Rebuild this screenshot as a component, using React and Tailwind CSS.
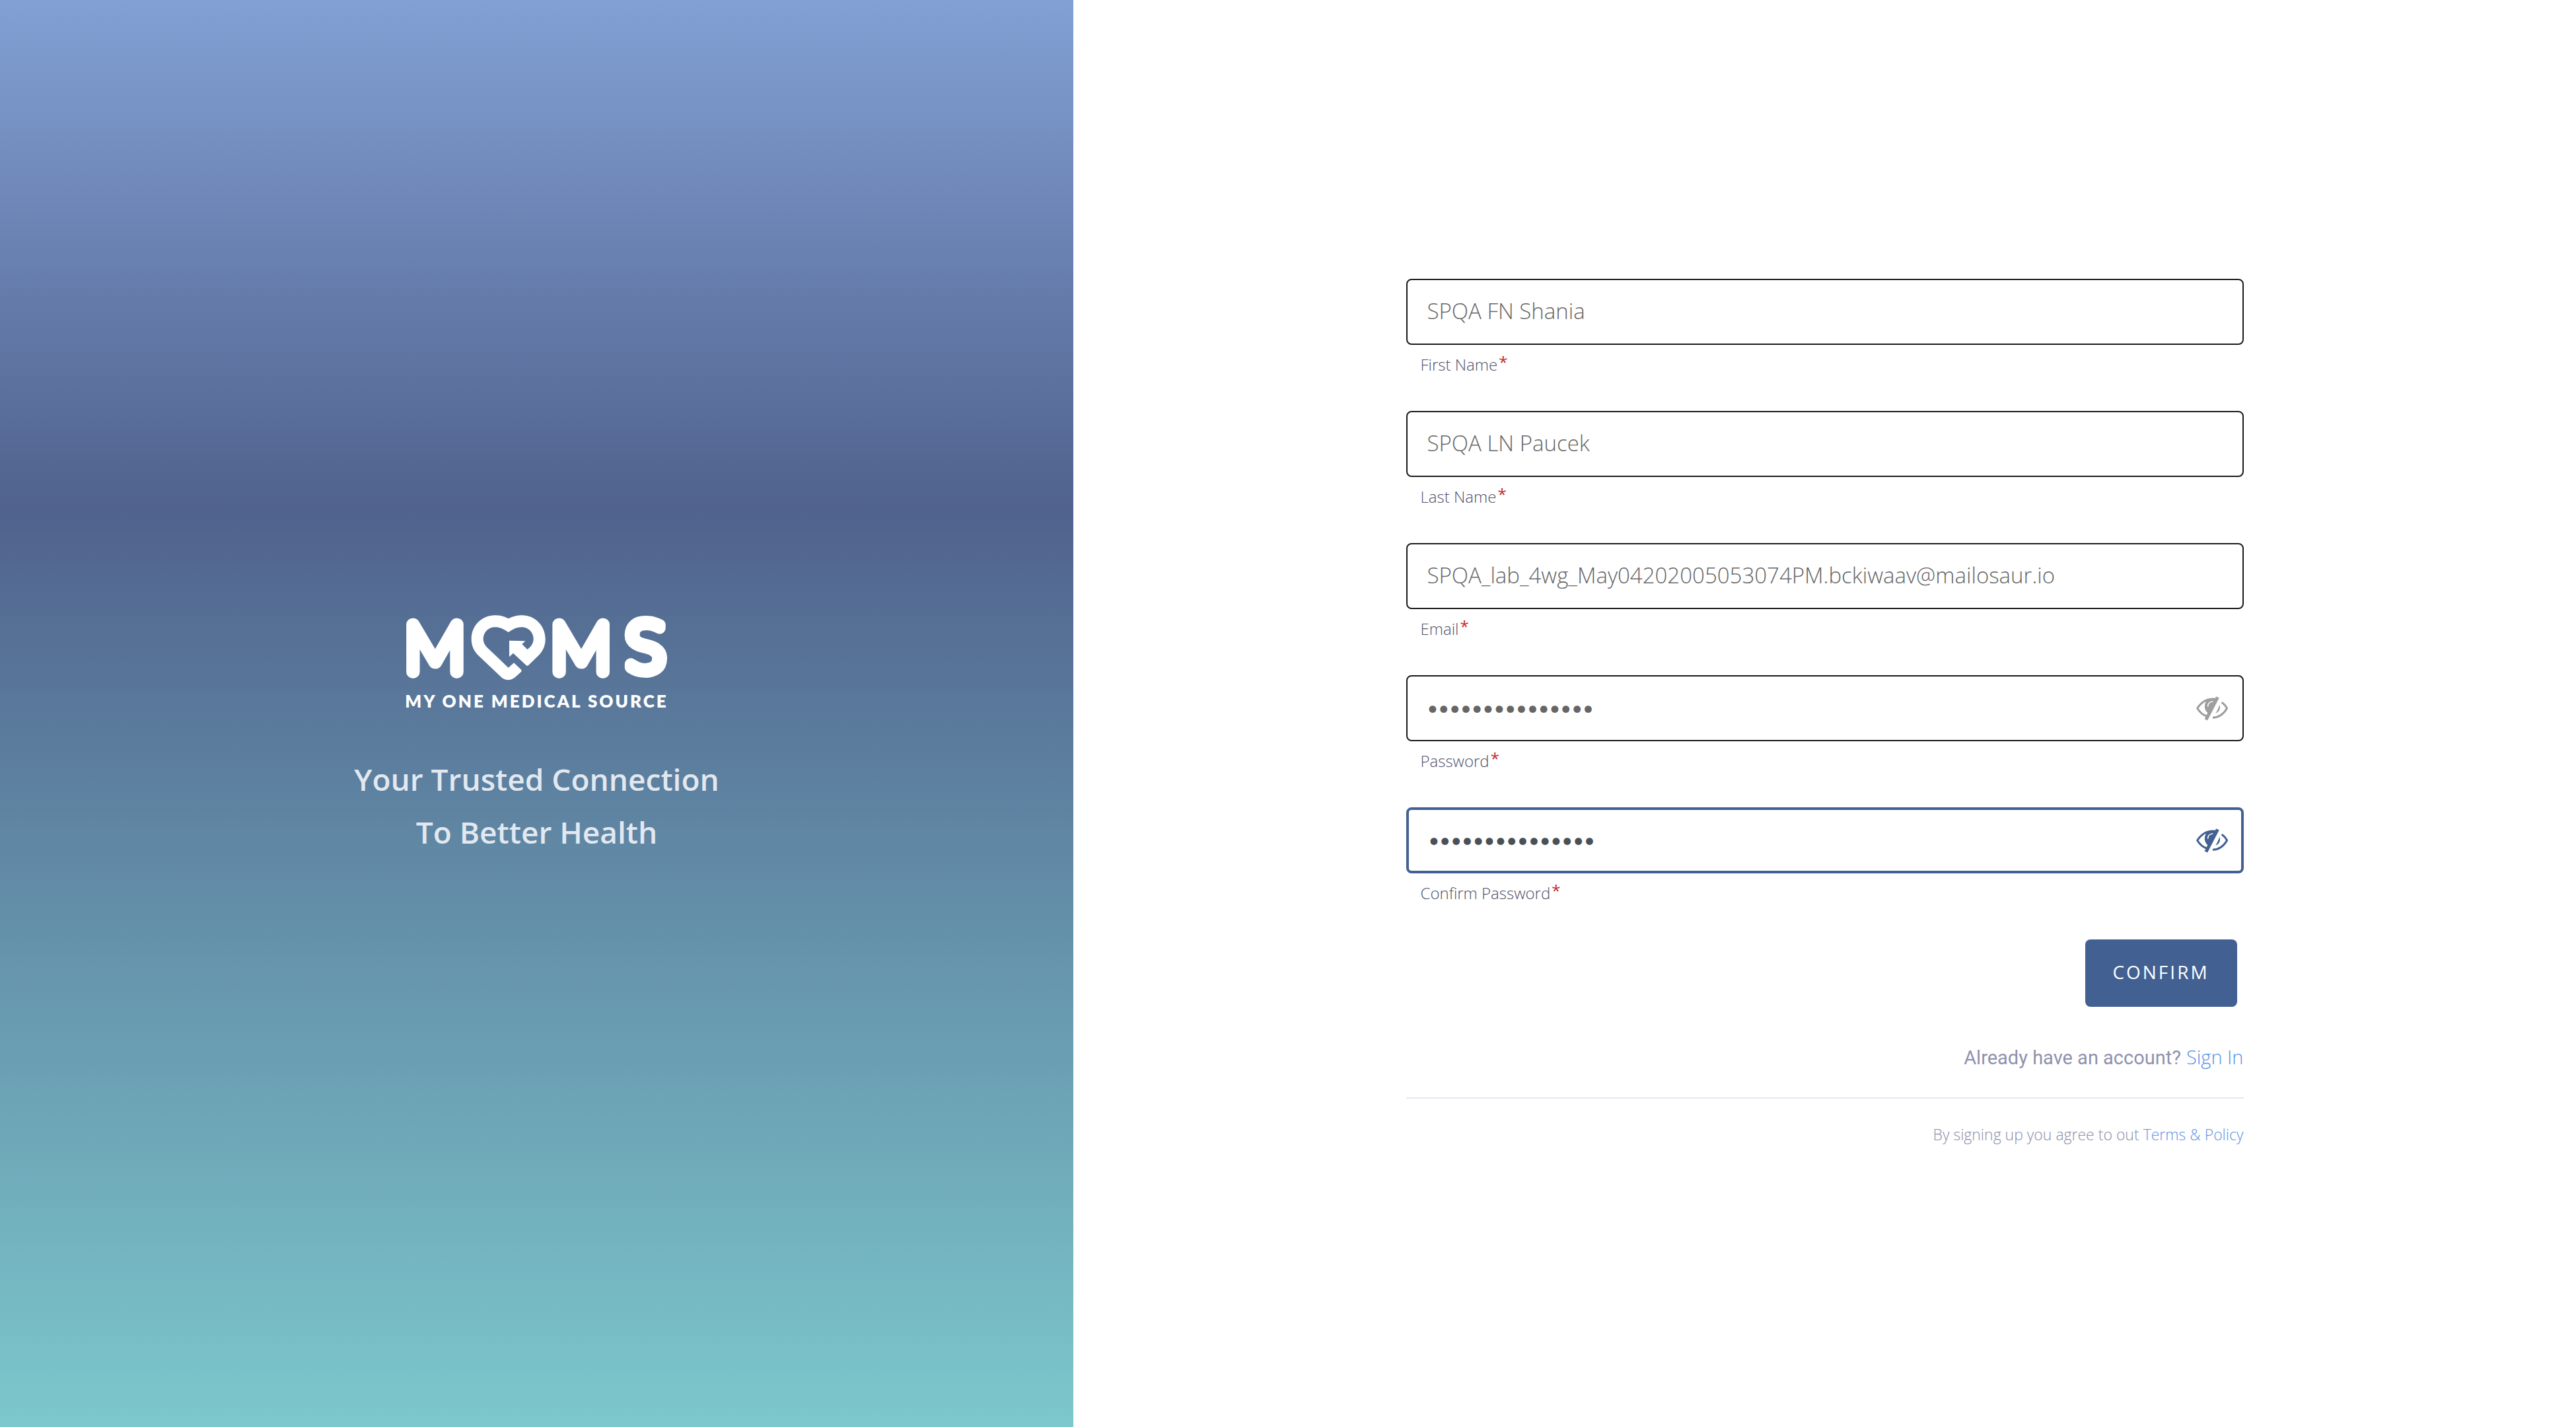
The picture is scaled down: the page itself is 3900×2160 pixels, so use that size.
import React, { useState } from "react";

const SANS = "font-['Open_Sans',sans-serif]";

function Logo() {
  return (
    <svg viewBox="70 88 1200 300" className="h-[100px] w-[400px] overflow-visible" role="img" aria-label="MOMS">
      <g fill="#fff" stroke="#fff" strokeLinejoin="round" strokeWidth="58" fontFamily="Lato, sans-serif" fontWeight="100" fontSize="306">
        <text x="70" y="346">M</text>
        <text x="734" y="346">M</text>
      </g>
      <text x="1068" y="344" fill="#fff" stroke="#fff" strokeLinejoin="round" strokeWidth="54" fontFamily="'DejaVu Sans', sans-serif" fontWeight="200" fontSize="300">
        S
      </text>
      <path
        fill="#fff"
        d="M540 104C565 92 585 89 602 89C662 89 708 138 708 198C708 232 692 258 672 276L632 315Q626 321 620 315L562 261L544 278L544 204L617 206L602 220L626 244C642 233 654 218 654 196C654 166 630 143 600 143C575 143 560 154 540 166C520 154 505 143 480 143C450 143 426 166 426 196C426 212 433 224 444 236L540 327L565 305L597 335Q602 341 597 347L570 371Q540 394 511 373L404 272C384 252 372 228 372 196C372 136 420 89 480 89C505 89 520 94 540 104Z"
      />
    </svg>
  );
}

function EyeOff() {
  return (
    <svg viewBox="609 160 150 114" className="h-[38px] w-[50px]" fill="none" stroke="currentColor" aria-hidden="true">
      <path strokeWidth="9" strokeLinejoin="round" d="M702 176C664 170 636 188 617 217C628 236 643 249 664 255" />
      <path fill="currentColor" stroke="none" d="M664 178C646 194 646 224 664 238L672 242L704 182L700 172Z" />
      <path stroke="#fff" strokeWidth="5" strokeLinecap="round" d="M665 208C665 196 674 188 686 187" />
      <path strokeWidth="15" d="M709.500 167L656.500 269" />
      <path strokeWidth="9" strokeLinejoin="round" d="M728 190C738 197 746 206 752 217C736 245 714 259 687 260" />
      <path fill="currentColor" stroke="none" d="M718 201C724 220 716 234 700 240C708 228 713 216 718 201Z" />
    </svg>
  );
}

function Field({ id, label, value, type = "text", active = false }) {
  const [text, setText] = useState(value);
  const [shown, setShown] = useState(false);
  const secret = type === "password";
  return (
    <div>
      <div
        className={
          "flex h-[100px] items-center rounded-lg bg-white " +
          (active ? "border-4 border-[#426192]" : "border-2 border-[#1a1a1a]")
        }
      >
        <input
          id={id}
          type={secret && !shown ? "password" : "text"}
          value={text}
          onChange={(e) => setText(e.target.value)}
          className={
            "h-full min-w-0 flex-1 bg-transparent pb-[2px] pl-[30px] outline-none " +
            (secret ? "font-['Lato',sans-serif] text-[29px] font-normal " : "text-[33px] font-light ") +
            (active ? "text-[#495057]" : "text-[#666666]")
          }
        />
        {secret && (
          <button
            type="button"
            aria-label={"Show " + label}
            onClick={() => setShown(!shown)}
            className={active ? "mr-[19px] text-[#426192]" : "mr-[21px] text-[#9e9e9e]"}
          >
            <EyeOff />
          </button>
        )}
      </div>
      <label htmlFor={id} className="mt-3 flex pl-[22px] text-2xl/9 font-light text-[#4f4f6b]">
        {label}
        <sup className="-top-1 pl-[2px] text-2xl/9 font-normal text-[#c1272d]">*</sup>
      </label>
    </div>
  );
}

export default function App() {
  return (
    <main className={"flex min-h-screen bg-white " + SANS}>
      <section className="flex w-5/12 flex-col items-center justify-center bg-[linear-gradient(180deg,#82a0d4_0%,#50628d_35.6%,#7cc8cc_100%)] pt-[70px]">
        <Logo />
        <p className="mt-[14px] font-['Lato',sans-serif] text-[26px]/8 font-extrabold tracking-[3px] text-white">MY ONE MEDICAL SOURCE</p>
        <h1 className="mt-[62px] text-center text-[46px]/[80px] font-semibold text-[#e2e8f0]">
          Your Trusted Connection
          <br />
          To Better Health
        </h1>
      </section>

      <section className="flex flex-1 items-center justify-center pb-1">
        <form className="w-full max-w-[1268px]" onSubmit={(e) => e.preventDefault()}>
          <div className="flex flex-col gap-[52px]">
            <Field id="first" label="First Name" value="SPQA FN Shania" />
            <Field id="last" label="Last Name" value="SPQA LN Paucek" />
            <Field id="email" label="Email" value="SPQA_lab_4wg_May04202005053074PM.bckiwaav@mailosaur.io" />
            <Field id="password" label="Password" type="password" value="mailosaur-05304" />
            <Field id="confirm" label="Confirm Password" type="password" value="mailosaur-05304" active />
            <button
              type="submit"
              className="mr-[10px] flex h-[102px] w-[230px] items-center justify-center self-end rounded-lg bg-[#426192] pb-1 text-[28px] font-medium tracking-[3px] text-white"
            >
              CONFIRM
            </button>
          </div>
          <p className="mt-14 flex items-baseline justify-end gap-2 text-[29px]/10 font-light text-[#8f92ad]">
            <span className="font-['Roboto',sans-serif] font-normal">Already have an account?</span>
            <a href="#signin" className="text-[#5b92e5]">Sign In</a>
          </p>
          <hr className="mt-10 border-t-2 border-[#e5e8f4]" />
          <p className="mt-9 text-right text-[23px]/9 font-light text-[#8a8ca8]">
            By signing up you agree to out{" "}
            <a href="#terms" className="text-[#5b92e5]">Terms &amp; Policy</a>
          </p>
        </form>
      </section>
    </main>
  );
}
